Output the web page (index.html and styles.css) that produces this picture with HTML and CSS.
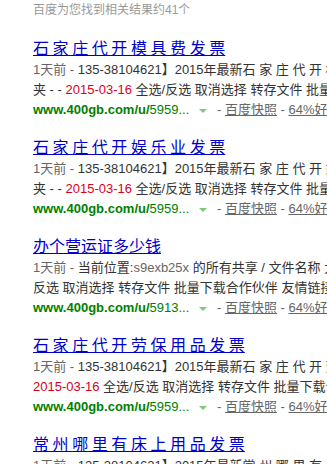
FILE: index.html
```html
<!DOCTYPE html>
<html lang="zh-CN">
<head>
<meta charset="utf-8">
<title>百度搜索结果</title>
<link rel="stylesheet" href="styles.css">
</head>
<body>
<div class="page">
  <div class="nums">百度为您找到相关结果约41个</div>

  <div class="result">
    <a class="title" href="#">石 家 庄 代 开 模 具 费 发 票</a>
    <div class="abs">
      <div class="line"><span class="time">1天前 - </span>135-38104621】2015年最新石 家 庄 代 开 模 具 费 发 票 分享文件夹</div>
      <div class="line"><span>夹 - - </span><span class="date">2015-03-16</span> 全选/反选 取消选择 转存文件 批量下载合作伙伴</div>
      <div class="line url-line"><span class="url"><b>www.400gb.com/u/</b>5959...</span><span class="arrow"></span><span class="gray"> - </span><a class="gray link" href="#">百度快照</a><span class="gray"> - </span><a class="gray link" href="#">64%好评</a></div>
    </div>
  </div>

  <div class="result">
    <a class="title" href="#">石 家 庄 代 开 娱 乐 业 发 票</a>
    <div class="abs">
      <div class="line"><span class="time">1天前 - </span>135-38104621】2015年最新石 家 庄 代 开 娱 乐 业 发 票 分享文件夹</div>
      <div class="line"><span>夹 - - </span><span class="date">2015-03-16</span> 全选/反选 取消选择 转存文件 批量下载合作伙伴</div>
      <div class="line url-line"><span class="url"><b>www.400gb.com/u/</b>5959...</span><span class="arrow"></span><span class="gray"> - </span><a class="gray link" href="#">百度快照</a><span class="gray"> - </span><a class="gray link" href="#">64%好评</a></div>
    </div>
  </div>

  <div class="result">
    <a class="title" href="#">办个营运证多少钱</a>
    <div class="abs">
      <div class="line"><span class="time">1天前 - </span>当前位置:<span class="user">s9exb25x</span> 的所有共享 / 文件名称 大小 上传时间 全选/</div>
      <div class="line">反选 取消选择 转存文件 批量下载合作伙伴 友情链接 关于我们</div>
      <div class="line url-line"><span class="url"><b>www.400gb.com/u/</b>5913...</span><span class="arrow"></span><span class="gray"> - </span><a class="gray link" href="#">百度快照</a><span class="gray"> - </span><a class="gray link" href="#">64%好评</a></div>
    </div>
  </div>

  <div class="result">
    <a class="title" href="#">石 家 庄 代 开 劳 保 用 品 发 票</a>
    <div class="abs">
      <div class="line"><span class="time">1天前 - </span>135-38104621】2015年最新石 家 庄 代 开 劳 保 用 品 发 票 - -</div>
      <div class="line"><span class="date">2015-03-16</span> 全选/反选 取消选择 转存文件 批量下载合作伙伴 友情链接</div>
      <div class="line url-line"><span class="url"><b>www.400gb.com/u/</b>5959...</span><span class="arrow"></span><span class="gray"> - </span><a class="gray link" href="#">百度快照</a><span class="gray"> - </span><a class="gray link" href="#">64%好评</a></div>
    </div>
  </div>

  <div class="result">
    <a class="title" href="#">常 州 哪 里 有 床 上 用 品 发 票</a>
    <div class="abs">
      <div class="line"><span class="time">1天前 - </span>135-38104621】2015年最新常 州 哪 里 有 床 上 用 品 发 票</div>
      <div class="line"><span class="date">2015-03-16</span> 全选/反选 取消选择 转存文件 批量下载合作伙伴 友情链接</div>
    </div>
  </div>
</div>
</body>
</html>
```

FILE: styles.css
```css
html, body {
  margin: 0;
  padding: 0;
  background: #fff;
  overflow: hidden;
}

body {
  font-family: Arial, "Liberation Sans", "Noto Sans CJK SC", sans-serif;
  color: #333;
}

.page {
  padding-left: 33px;
  width: 600px;
}

.nums {
  font-size: 12px;
  line-height: 20px;
  color: #999;
  margin-bottom: 16px;
}

.result {
  margin-bottom: 15px;
}

.title {
  display: block;
  font-family: "Noto Sans CJK SC", sans-serif;
  font-size: 16px;
  line-height: 22px;
  color: #00c;
  text-decoration: underline;
  text-underline-offset: 1px;
  white-space: nowrap;
}

.abs {
  margin-top: 2px;
  font-size: 13px;
}

.line {
  line-height: 20px;
  height: 20px;
  white-space: nowrap;
}

.time {
  color: #666;
}

.date {
  color: #d8001c;
}

.user {
  color: #666;
}

.url-line {
  display: flex;
  align-items: center;
}

.url {
  color: #008000;
}

.url b {
  font-weight: bold;
}

.arrow {
  display: inline-block;
  width: 0;
  height: 0;
  border-left: 4px solid transparent;
  border-right: 4px solid transparent;
  border-top: 4px solid #7fc77a;
  margin: 2px 6px 0 10px;
}

.gray {
  color: #666;
  white-space: pre;
}

.link {
  text-decoration: underline;
}
```
